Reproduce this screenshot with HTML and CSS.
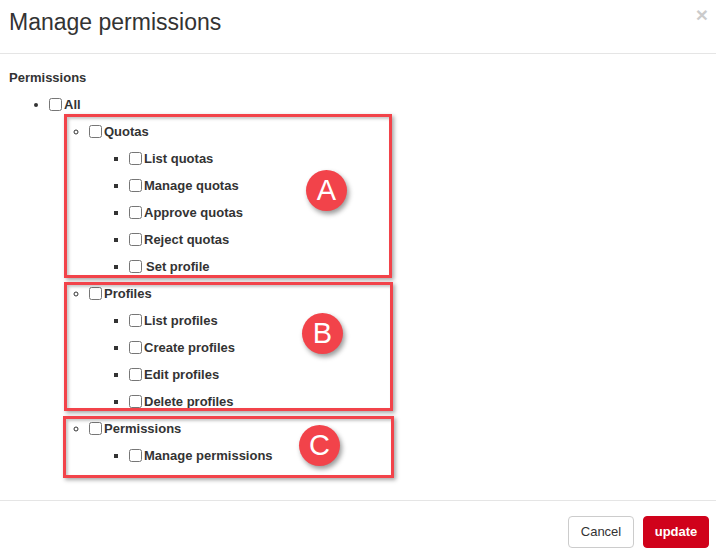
FILE: index.html
```html
<!DOCTYPE html>
<html>
<head>
<meta charset="utf-8">
<title>Manage permissions</title>
<link rel="stylesheet" href="styles.css">
</head>
<body>
<div class="modal">
  <div class="modal-header">
    <h4 class="modal-title">Manage permissions</h4>
    <button class="close" type="button">&times;</button>
  </div>
  <div class="modal-body">
    <label class="field-label">Permissions</label>
    <ul class="tree">
      <li><input type="checkbox">All
        <ul>
          <li class="group group-a"><input type="checkbox">Quotas
            <span class="badge badge-a">A</span>
            <ul>
              <li><input type="checkbox">List quotas</li>
              <li><input type="checkbox">Manage quotas</li>
              <li><input type="checkbox">Approve quotas</li>
              <li><input type="checkbox">Reject quotas</li>
              <li><input type="checkbox"><span class="lead">Set profile</span></li>
            </ul>
          </li>
          <li class="group group-b"><input type="checkbox">Profiles
            <span class="badge badge-b">B</span>
            <ul>
              <li><input type="checkbox">List profiles</li>
              <li><input type="checkbox">Create profiles</li>
              <li><input type="checkbox">Edit profiles</li>
              <li><input type="checkbox">Delete profiles</li>
            </ul>
          </li>
          <li class="group group-c"><input type="checkbox">Permissions
            <span class="badge badge-c">C</span>
            <ul>
              <li><input type="checkbox">Manage permissions</li>
            </ul>
          </li>
        </ul>
      </li>
    </ul>
  </div>
  <div class="modal-footer">
    <button class="btn btn-default" type="button">Cancel</button>
    <button class="btn btn-primary" type="button">update</button>
  </div>
</div>
</body>
</html>
```

FILE: styles.css
```css
*, *::before, *::after { box-sizing: border-box; }

html, body {
  margin: 0;
  padding: 0;
  background: #fff;
}

body {
  font-family: "Liberation Sans", Arial, sans-serif;
  font-size: 13px;
  color: #333;
}

.modal {
  width: 716px;
  height: 558px;
  display: flex;
  flex-direction: column;
}

.modal-header {
  position: relative;
  padding: 9px 9px 18px;
  border-bottom: 1px solid #e5e5e5;
}

.modal-title {
  margin: 0;
  font-size: 23px;
  line-height: 26px;
  font-weight: normal;
  color: #333;
}

.close {
  position: absolute;
  top: 4px;
  right: 8px;
  padding: 0;
  border: 0;
  background: transparent;
  font-family: "Liberation Sans", Arial, sans-serif;
  font-size: 21px;
  font-weight: bold;
  line-height: 21px;
  color: #000;
  opacity: 0.2;
}

.modal-body {
  flex: 1;
  padding: 14px 9px 0;
}

.field-label {
  display: block;
  font-weight: bold;
  line-height: 20px;
  margin-bottom: 3px;
}

.tree, .tree ul {
  margin: 0;
  padding-left: 40px;
}

.tree li {
  line-height: 27px;
  font-weight: bold;
}

.tree input[type="checkbox"] {
  width: 13px;
  height: 13px;
  margin: 0 2px 0 0;
  vertical-align: -2px;
}

.lead {
  margin-left: 2px;
}

.group {
  position: relative;
}

.group::after {
  content: "";
  position: absolute;
  left: -25px;
  border: 3px solid #f2434a;
  box-shadow: 2px 2px 4px rgba(0, 0, 0, 0.35), inset 2px 2px 3px rgba(0, 0, 0, 0.22);
  pointer-events: none;
}

.group-a::after {
  top: -4px;
  height: 164px;
  width: 328px;
}

.group-b::after {
  top: 2px;
  height: 129px;
  width: 329px;
}

.group-c::after {
  left: -26px;
  top: 1px;
  height: 62px;
  width: 331px;
}

.badge {
  position: absolute;
  width: 41px;
  height: 41px;
  border-radius: 50%;
  background: #f2434a;
  color: #fff;
  font-family: "Liberation Sans", Arial, sans-serif;
  font-weight: normal;
  font-size: 29px;
  line-height: 41px;
  text-align: center;
  box-shadow: 2px 3px 5px rgba(0, 0, 0, 0.4);
  z-index: 1;
}

.badge-a { left: 217px; top: 52px; }
.badge-b { left: 213px; top: 33px; }
.badge-c { left: 210px; top: 10px; }

.modal-footer {
  display: flex;
  justify-content: flex-end;
  gap: 9px;
  padding: 15px 7px 10px;
  border-top: 1px solid #e5e5e5;
}

.btn {
  width: 66px;
  height: 32px;
  padding: 0;
  border: 1px solid #ccc;
  border-radius: 4px;
  font-family: "Liberation Sans", Arial, sans-serif;
  font-size: 13px;
  line-height: 30px;
  text-align: center;
}

.btn-default {
  background: #fff;
  color: #333;
}

.btn-primary {
  background: #d0021b;
  border-color: #d0021b;
  color: #fff;
  font-weight: bold;
}
```
